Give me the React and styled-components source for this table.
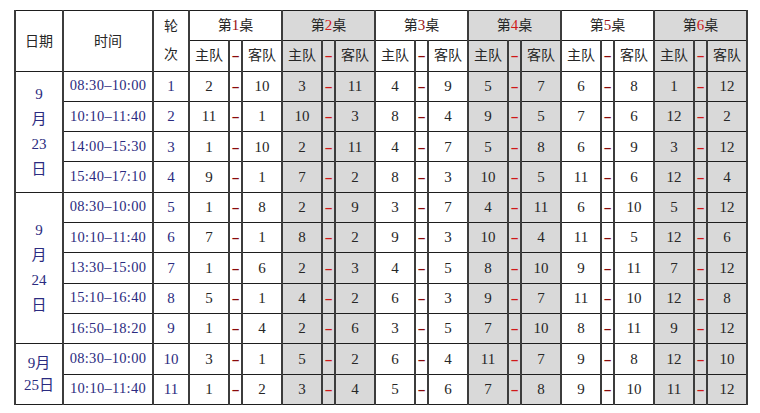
import React from "react";
import styled, { createGlobalStyle } from "styled-components";

const Global = createGlobalStyle`
  html, body { margin: 0; padding: 0; background: #fff; }
  body { font-family: "Liberation Serif", "Noto Sans CJK SC", serif; }
`;

const Page = styled.div`
  padding: 10px 14px;
`;

const Table = styled.table`
  border-collapse: collapse;
  table-layout: fixed;
  width: 732px;
  border: 1.5px solid #222;
`;

const Row = styled.tr`
  height: 30.3px;
`;

const Cell = styled.td`
  padding: 0;
  text-align: center;
  vertical-align: middle;
  font-size: ${(p) => p.$size || "15px"};
  line-height: 1.1;
  letter-spacing: ${(p) => p.$ls || "0"};
  color: ${(p) => p.$color || "#262626"};
  background: ${(p) => (p.$shade ? "#d9d9d9" : "#fff")};
  border-top: 1px solid #1e1e1e;
  border-bottom: 1px solid #1e1e1e;
  border-left: 2px solid #3c3c3c;
  border-right: 2px solid #3c3c3c;
  font-family: ${(p) =>
    p.$sans
      ? '"Noto Sans CJK SC", sans-serif'
      : '"Liberation Serif", "Noto Sans CJK SC", serif'};
  white-space: nowrap;
`;

const HeadCell = styled(Cell).attrs({ as: "th" })`
  font-weight: normal;
  font-size: 14px;
  color: #262626;
`;

const Red = styled.span`
  color: ${(p) => (p.$shade ? "#d01818" : "#9a1010")};
  font-family: "Liberation Serif", serif;
  font-size: 15px;
`;

const Dash = styled.span`
  color: ${(p) => (p.$shade ? "#d01818" : "#8a0a0a")};
  font-family: "Liberation Sans", sans-serif;
  font-weight: bold;
  font-size: 13px;
`;

const Stack = styled.div`
  display: flex;
  flex-direction: column;
  align-items: center;
  line-height: ${(p) => p.$lh || "25px"};
`;

const Col = styled.col`
  width: ${(p) => p.$w}px;
`;

const NAVY = "#2b2b80";

const rows = [
  ["08:30–10:00", 1, [[2, 10], [3, 11], [4, 9], [5, 7], [6, 8], [1, 12]]],
  ["10:10–11:40", 2, [[11, 1], [10, 3], [8, 4], [9, 5], [7, 6], [12, 2]]],
  ["14:00–15:30", 3, [[1, 10], [2, 11], [4, 7], [5, 8], [6, 9], [3, 12]]],
  ["15:40–17:10", 4, [[9, 1], [7, 2], [8, 3], [10, 5], [11, 6], [12, 4]]],
  ["08:30–10:00", 5, [[1, 8], [2, 9], [3, 7], [4, 11], [6, 10], [5, 12]]],
  ["10:10–11:40", 6, [[7, 1], [8, 2], [9, 3], [10, 4], [11, 5], [12, 6]]],
  ["13:30–15:00", 7, [[1, 6], [2, 3], [4, 5], [8, 10], [9, 11], [7, 12]]],
  ["15:10–16:40", 8, [[5, 1], [4, 2], [6, 3], [9, 7], [11, 10], [12, 8]]],
  ["16:50–18:20", 9, [[1, 4], [2, 6], [3, 5], [7, 10], [8, 11], [9, 12]]],
  ["08:30–10:00", 10, [[3, 1], [5, 2], [6, 4], [11, 7], [9, 8], [12, 10]]],
  ["10:10–11:40", 11, [[1, 2], [3, 4], [5, 6], [7, 8], [9, 10], [11, 12]]],
];

const dates = {
  0: { span: 4, lines: ["9", "月", "23", "日"] },
  4: { span: 5, lines: ["9", "月", "24", "日"] },
  9: { span: 2, lines: ["9月", "25日"], lh: "22px" },
};

const tables = [1, 2, 3, 4, 5, 6];

export default function App() {
  return (
    <Page>
      <Global />
      <Table>
        <colgroup>
          <Col $w={48} />
          <Col $w={90} />
          <Col $w={36} />
          {tables.map((t) => (
            <React.Fragment key={t}>
              <Col $w={40} />
              <Col $w={13} />
              <Col $w={40} />
            </React.Fragment>
          ))}
        </colgroup>
        <thead>
          <Row>
            <HeadCell rowSpan={2} $sans>日期</HeadCell>
            <HeadCell rowSpan={2} $sans>时间</HeadCell>
            <HeadCell rowSpan={2}>
              <Stack $lh="28px">
                <span>轮</span>
                <span>次</span>
              </Stack>
            </HeadCell>
            {tables.map((t) => (
              <HeadCell key={t} colSpan={3} $shade={t % 2 === 0}>
                第<Red $shade={t % 2 === 0}>{t}</Red>桌
              </HeadCell>
            ))}
          </Row>
          <Row>
            {tables.map((t) => (
              <React.Fragment key={t}>
                <HeadCell $shade={t % 2 === 0}>主队</HeadCell>
                <HeadCell $shade={t % 2 === 0}>
                  <Dash $shade={t % 2 === 0}>–</Dash>
                </HeadCell>
                <HeadCell $shade={t % 2 === 0}>客队</HeadCell>
              </React.Fragment>
            ))}
          </Row>
        </thead>
        <tbody>
          {rows.map(([time, round, games], i) => (
            <Row key={i}>
              {dates[i] && (
                <Cell rowSpan={dates[i].span} $color={NAVY}>
                  <Stack $lh={dates[i].lh}>
                    {dates[i].lines.map((l, k) => (
                      <span key={k}>{l}</span>
                    ))}
                  </Stack>
                </Cell>
              )}
              <Cell $color={NAVY} $ls="0.3px" $size="14.5px">{time}</Cell>
              <Cell $color={NAVY}>{round}</Cell>
              {games.map(([h, a], g) => {
                const shade = g % 2 === 1;
                return (
                  <React.Fragment key={g}>
                    <Cell $shade={shade}>{h}</Cell>
                    <Cell $shade={shade}>
                      <Dash $shade={shade}>–</Dash>
                    </Cell>
                    <Cell $shade={shade}>{a}</Cell>
                  </React.Fragment>
                );
              })}
            </Row>
          ))}
        </tbody>
      </Table>
    </Page>
  );
}
